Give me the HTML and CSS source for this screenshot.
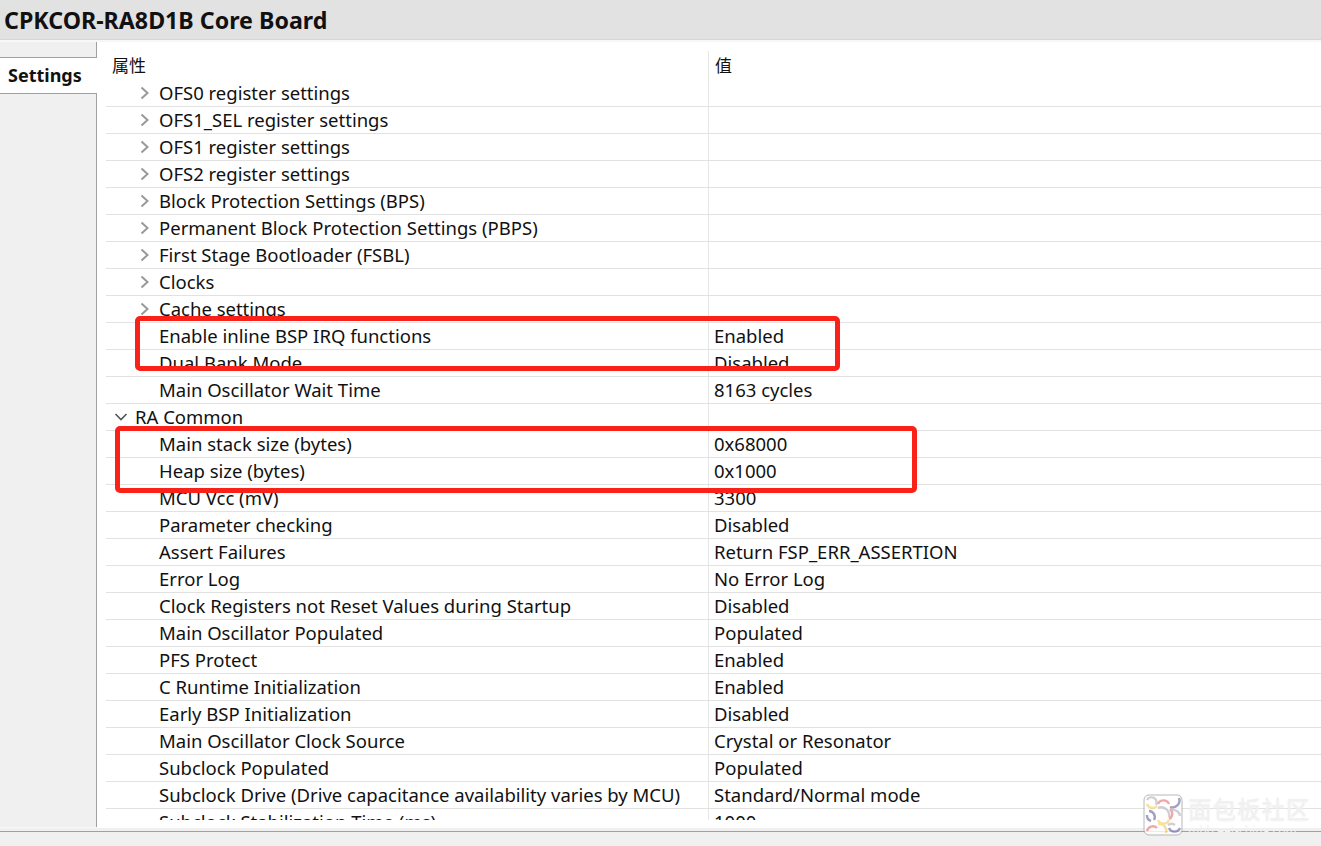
FILE: index.html
```html
<!DOCTYPE html>
<html lang="en">
<head>
    <meta charset="UTF-8">
    <meta name="viewport" content="width=device-width, initial-scale=1.0">
    <title>CPKCOR-RA8D1B Core Board</title>
    <link rel="stylesheet" href="styles.css">
</head>
<body>
    <h1 class="title">CPKCOR-RA8D1B Core Board</h1>
    <div class="content">
        <div class="sidebar">
            <div class="tab">Settings</div>
        </div>
        <div class="props">
            <div class="head"><div class="name">属性</div><div class="val">值</div></div>
            <div class="rows">
                <div class="row"><div class="name"><svg class="chev" viewBox="0 0 10 14"><path d="M1.5 1.5 7.5 7 1.5 12.5"/></svg>OFS0 register settings</div><div class="val"></div></div>
                <div class="row"><div class="name"><svg class="chev" viewBox="0 0 10 14"><path d="M1.5 1.5 7.5 7 1.5 12.5"/></svg>OFS1_SEL register settings</div><div class="val"></div></div>
                <div class="row"><div class="name"><svg class="chev" viewBox="0 0 10 14"><path d="M1.5 1.5 7.5 7 1.5 12.5"/></svg>OFS1 register settings</div><div class="val"></div></div>
                <div class="row"><div class="name"><svg class="chev" viewBox="0 0 10 14"><path d="M1.5 1.5 7.5 7 1.5 12.5"/></svg>OFS2 register settings</div><div class="val"></div></div>
                <div class="row"><div class="name"><svg class="chev" viewBox="0 0 10 14"><path d="M1.5 1.5 7.5 7 1.5 12.5"/></svg>Block Protection Settings (BPS)</div><div class="val"></div></div>
                <div class="row"><div class="name"><svg class="chev" viewBox="0 0 10 14"><path d="M1.5 1.5 7.5 7 1.5 12.5"/></svg>Permanent Block Protection Settings (PBPS)</div><div class="val"></div></div>
                <div class="row"><div class="name"><svg class="chev" viewBox="0 0 10 14"><path d="M1.5 1.5 7.5 7 1.5 12.5"/></svg>First Stage Bootloader (FSBL)</div><div class="val"></div></div>
                <div class="row"><div class="name"><svg class="chev" viewBox="0 0 10 14"><path d="M1.5 1.5 7.5 7 1.5 12.5"/></svg>Clocks</div><div class="val"></div></div>
                <div class="row"><div class="name"><svg class="chev" viewBox="0 0 10 14"><path d="M1.5 1.5 7.5 7 1.5 12.5"/></svg>Cache settings</div><div class="val"></div></div>
                <div class="row"><div class="name">Enable inline BSP IRQ functions</div><div class="val">Enabled</div></div>
                <div class="row"><div class="name">Dual Bank Mode</div><div class="val">Disabled</div></div>
                <div class="row"><div class="name">Main Oscillator Wait Time</div><div class="val">8163 cycles</div></div>
                <div class="row"><div class="name group"><svg class="chev-down" viewBox="0 0 14 10"><path d="M1.5 2 7 7.5 12.5 2"/></svg>RA Common</div><div class="val"></div></div>
                <div class="row"><div class="name">Main stack size (bytes)</div><div class="val">0x68000</div></div>
                <div class="row"><div class="name">Heap size (bytes)</div><div class="val">0x1000</div></div>
                <div class="row"><div class="name">MCU Vcc (mV)</div><div class="val">3300</div></div>
                <div class="row"><div class="name">Parameter checking</div><div class="val">Disabled</div></div>
                <div class="row"><div class="name">Assert Failures</div><div class="val">Return FSP_ERR_ASSERTION</div></div>
                <div class="row"><div class="name">Error Log</div><div class="val">No Error Log</div></div>
                <div class="row"><div class="name">Clock Registers not Reset Values during Startup</div><div class="val">Disabled</div></div>
                <div class="row"><div class="name">Main Oscillator Populated</div><div class="val">Populated</div></div>
                <div class="row"><div class="name">PFS Protect</div><div class="val">Enabled</div></div>
                <div class="row"><div class="name">C Runtime Initialization</div><div class="val">Enabled</div></div>
                <div class="row"><div class="name">Early BSP Initialization</div><div class="val">Disabled</div></div>
                <div class="row"><div class="name">Main Oscillator Clock Source</div><div class="val">Crystal or Resonator</div></div>
                <div class="row"><div class="name">Subclock Populated</div><div class="val">Populated</div></div>
                <div class="row"><div class="name">Subclock Drive (Drive capacitance availability varies by MCU)</div><div class="val">Standard/Normal mode</div></div>
                <div class="row"><div class="name">Subclock Stabilization Time (ms)</div><div class="val">1000</div></div>
            </div>
        </div>
    </div>
    <div class="footer"></div>

    <div class="mark mark-one"></div>
    <div class="mark mark-two"></div>

    <div class="watermark">
        <svg class="wm-logo" viewBox="0 0 40 42">
            <rect x="1" y="1" width="38" height="40" rx="5" fill="#fff" stroke="#a8a8a8"/>
            <g fill="none" stroke-width="2.4">
                <path d="M4 6a5 5 0 0 1 9 5" stroke="#c4c4ca"/>
                <path d="M15 10a6 6 0 0 1 11 0" stroke="#f09090"/>
                <path d="M36 4a7 7 0 0 1-9 9" stroke="#8a8ab6"/>
                <path d="M4 10a6 6 0 0 0 10 2" stroke="#f7da85"/>
                <path d="M6 17a6 6 0 0 1 5 9" stroke="#8a8ab6"/>
                <path d="M4 21a6 6 0 0 0 4 6" stroke="#8a8ab6"/>
                <path d="M15 14a8 8 0 0 1 11 9" stroke="#c4c4ca"/>
                <path d="M15 26a6 6 0 0 0 11 0" stroke="#f7da85"/>
                <path d="M27 15a6 6 0 0 1-1 10" stroke="#f09090"/>
                <path d="M29 16a7 7 0 0 1 8 6" stroke="#c4c4ca"/>
                <path d="M4 37a6 6 0 0 1 10-3" stroke="#f09090"/>
                <path d="M15 30a7 7 0 0 1 8 9" stroke="#f7da85"/>
                <path d="M25 31a6 6 0 0 1 7 0" stroke="#c4c4ca"/>
                <path d="M26 34a6 6 0 0 0 11 0" stroke="#8a8ab6"/>
            </g>
        </svg>
        <div class="wm-text">
            <div class="wm-name">面包板社区</div>
            <div class="wm-url">mbb.eet-china.com</div>
        </div>
    </div>
</body>
</html>
```

FILE: styles.css
```css
html, body {
    margin: 0;
    height: 846px;
    overflow: hidden;
}
body {
    position: relative;
    display: flex;
    flex-direction: column;
    background: #f0f0f0;
    color: #111;
    font-family: "Noto Sans", "Noto Sans CJK SC", sans-serif;
    font-size: 18.5px;
}
.title {
    height: 39px;
    margin: 0;
    padding-left: 4px;
    background: #e2e2e2;
    border-bottom: 1px solid #d6d6d6;
    font-size: 23.2px;
    font-weight: 700;
    line-height: 41px;
}
.content {
    display: flex;
    height: 788px;
    padding-top: 2px;
    box-sizing: border-box;
    background: #f7f7f7;
}
.sidebar {
    width: 97px;
    box-sizing: border-box;
    height: 785px;
    border-right: 1px solid #a0a0a0;
    background: #f0f0f0;
    padding-top: 15px;
}
.tab {
    height: 35px;
    padding-left: 8px;
    margin-right: -1px;
    position: relative;
    background: #fff;
    border-top: 1px solid #a0a0a0;
    border-bottom: 1px solid #a0a0a0;
    font-size: 18px;
    font-weight: 700;
    line-height: 35px;
}
.props {
    flex: 1;
    height: 786px;
    padding-left: 9px;
    background: #fff;
    overflow: hidden;
}
.head, .row {
    display: grid;
    grid-template-columns: 602px 1fr;
}
.head {
    height: 29px;
    margin-top: 9px;
    line-height: 29px;
}
.head .name {
    padding-left: 6px;
    font-size: 17px;
}
.head .val {
    padding-left: 6px;
    font-size: 17px;
}
.rows {
    height: 740px;
    overflow: hidden;
}
.row {
    height: 27px;
    box-sizing: border-box;
    border-bottom: 1px solid #e2e2e2;
    line-height: 26px;
    white-space: nowrap;
}
.name {
    display: flex;
    align-items: center;
    padding-left: 53px;
    position: relative;
}
.name.group {
    padding-left: 29px;
}
.val {
    padding-left: 5px;
    border-left: 1px solid #e6e6e6;
}
.chev {
    position: absolute;
    left: 34px;
    top: 6px;
    width: 10px;
    height: 14px;
}
.chev path {
    fill: none;
    stroke: #999;
    stroke-width: 2;
}
.chev-down {
    position: absolute;
    left: 8px;
    top: 8px;
    width: 14px;
    height: 10px;
}
.chev-down path {
    fill: none;
    stroke: #555;
    stroke-width: 1.6;
}
.footer {
    flex: 1;
    margin-top: 3px;
    border-top: 1px solid #a0a0a0;
}
.mark {
    position: absolute;
    box-sizing: border-box;
    border: 5px solid #fa2118;
    border-radius: 5px;
}
.mark-one {
    left: 135px;
    top: 316px;
    width: 705px;
    height: 55px;
}
.mark-two {
    left: 115px;
    top: 426px;
    width: 802px;
    height: 67px;
}
.watermark {
    position: absolute;
    left: 1143px;
    top: 794px;
    display: flex;
    gap: 5px;
}
.wm-logo {
    width: 40px;
    height: 42px;
    opacity: 0.8;
}
.wm-name {
    color: #f1f1f1;
    font-size: 23.5px;
    line-height: 30px;
    letter-spacing: 1px;
    white-space: nowrap;
    text-shadow: 0 1px 2px #ececec;
}
.wm-url {
    color: #f1f1f1;
    font-size: 12px;
    line-height: 13px;
    white-space: nowrap;
}
```
